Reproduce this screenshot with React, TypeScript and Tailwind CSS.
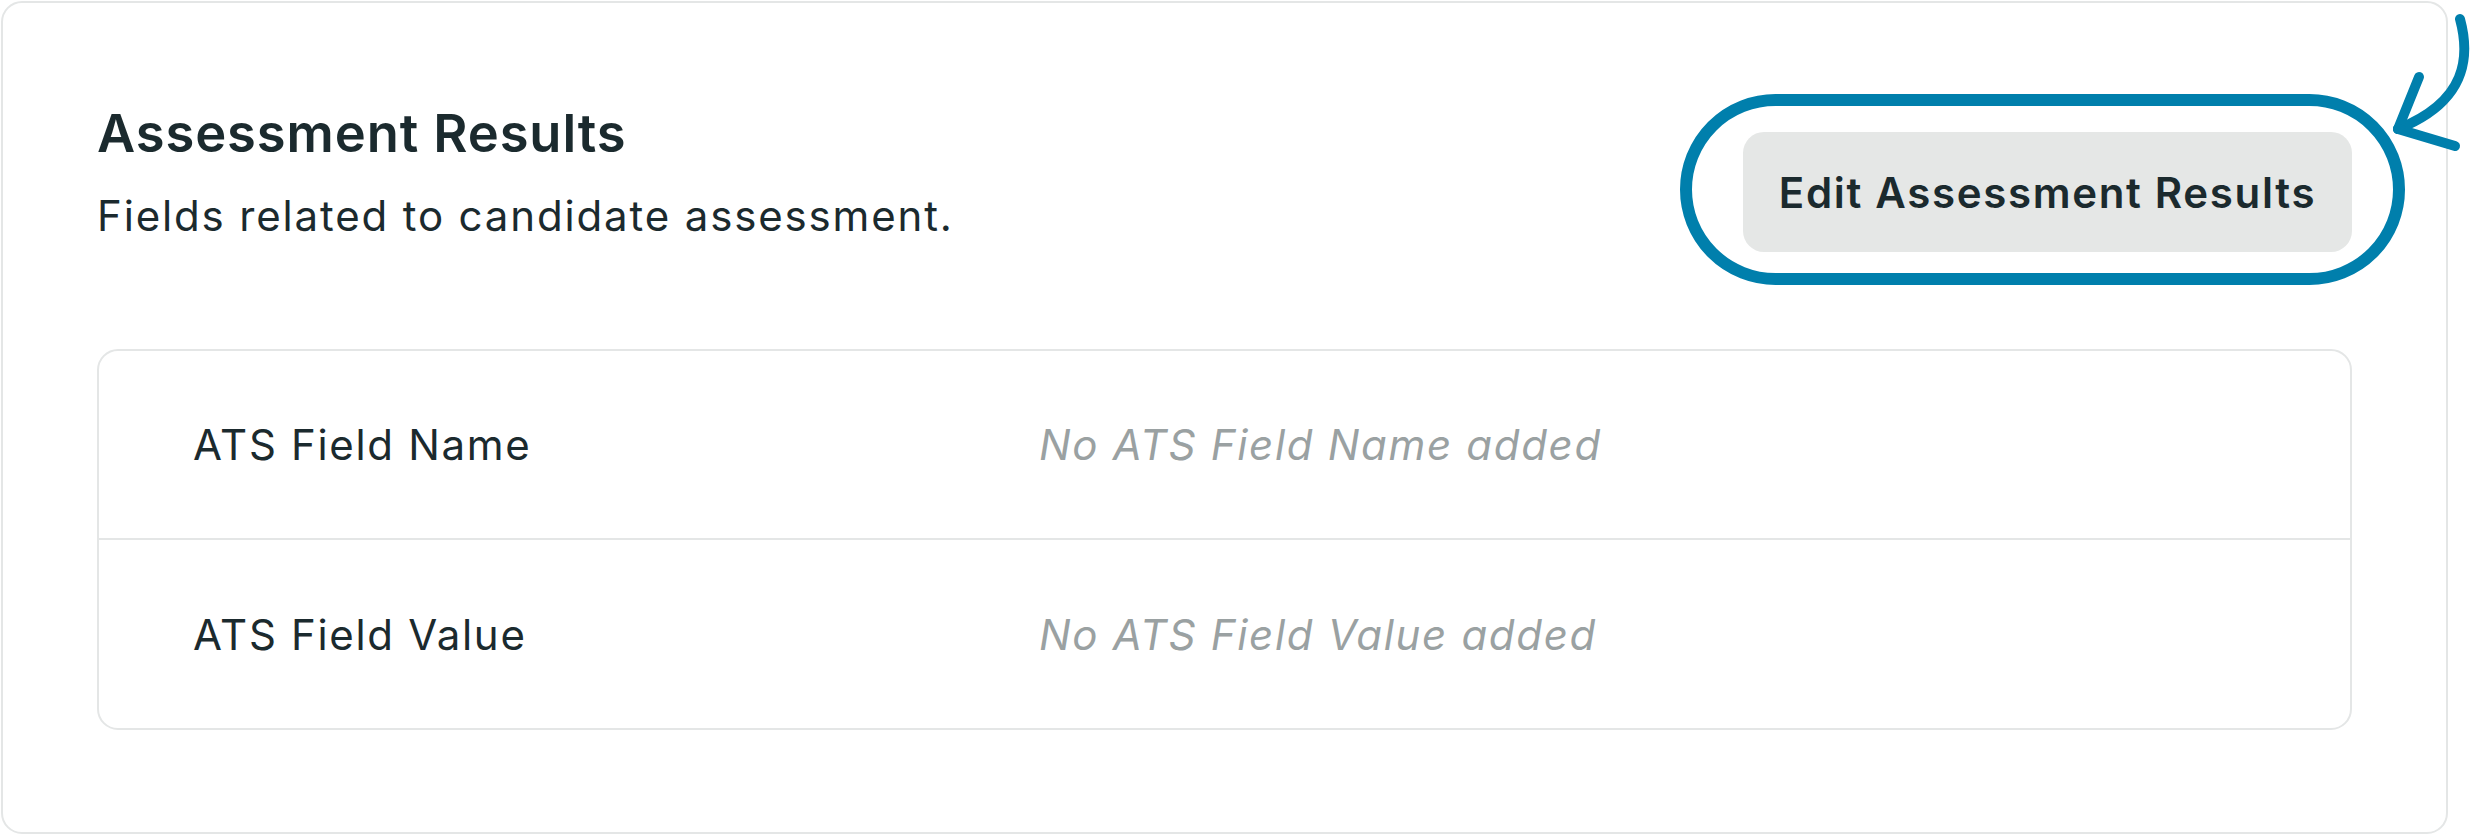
import React from 'react'

interface FieldRow {
  label: string
  empty: string
  height: string
}

const rows: FieldRow[] = [
  { label: 'ATS Field Name', empty: 'No ATS Field Name added', height: 'h-[189px]' },
  { label: 'ATS Field Value', empty: 'No ATS Field Value added', height: 'h-[188px]' },
]

function HighlightArrow() {
  return (
    <svg
      className="absolute left-[2370px] top-0 w-[101px] h-[170px] pointer-events-none"
      viewBox="0 0 101 170"
      fill="none"
      stroke="#007fac"
      strokeWidth={10}
      strokeLinecap="round"
      strokeLinejoin="round"
    >
      <path d="M90 18 C100 55, 98 100, 28 128" />
      <path d="M28 128 L49 76" />
      <path d="M28 128 L85 145" />
    </svg>
  )
}

export default function App() {
  return (
    <div className="relative w-[2471px] h-[837px] bg-white font-['Inter',sans-serif] text-[#1b2a2e]">
      <div className="ml-[1px] mt-[1px] w-[2447px] rounded-[21px] border-[2.6px] border-[#e4e6e6] px-[94px] pt-[99px] pb-[102px]">
        <div className="flex justify-between items-start">
          <div>
            <h2 className="text-[52.5px] leading-[63px] font-semibold tracking-[0.017em]">Assessment Results</h2>
            <p className="mt-[19px] text-[42px] leading-[63px] tracking-[0.044em]">
              Fields related to candidate assessment.
            </p>
          </div>
          <button
            type="button"
            className="mt-[30px] h-[120px] w-[609px] rounded-[21px] bg-[#e5e7e6] text-[42px] leading-[63px] font-semibold tracking-[0.04em] text-[#1b2a2e]"
          >
            Edit Assessment Results
          </button>
        </div>

        <div className="mt-[97px] rounded-[21px] border-[2.6px] border-[#e4e6e6]">
          {rows.map((row, i) => (
            <div
              key={row.label}
              className={`grid grid-cols-[846px_1fr] items-center px-[94px] ${row.height} ${
                i < rows.length - 1 ? 'border-b-[2.6px] border-[#e4e6e6]' : ''
              }`}
            >
              <span className="text-[42px] leading-[63px] tracking-[0.04em]">{row.label}</span>
              <span className="text-[42px] leading-[63px] italic tracking-[0.04em] text-[#9aa1a2]">{row.empty}</span>
            </div>
          ))}
        </div>
      </div>

      {/* annotation drawn over the button */}
      <div className="absolute left-[1680px] top-[93px] w-[725px] h-[191px] rounded-full border-[12px] border-[#007fac] pointer-events-none" />
      <HighlightArrow />
    </div>
  )
}
